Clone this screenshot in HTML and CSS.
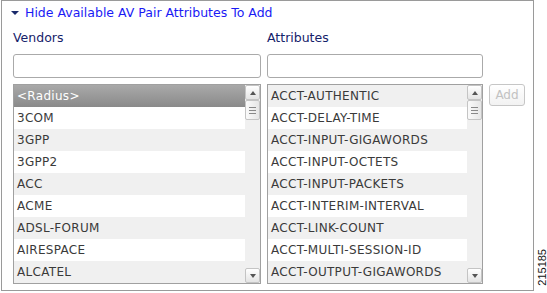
FILE: index.html
```html
<!DOCTYPE html>
<html lang="en">
<head>
  <meta charset="UTF-8" />
  <title>AV Pair Attributes</title>
  <link rel="stylesheet" href="styles.css">
</head>
<body>
  <div class="page">
    <div class="panel">
      <div class="toggle">
        <span class="caret"></span>
        <span class="toggle-text">Hide Available AV Pair Attributes To Add</span>
      </div>

      <div class="columns">
        <!-- Vendors -->
        <div class="column vendors">
          <div class="label">Vendors</div>
          <input type="text" class="filter" />
          <div class="listbox">
            <ul class="items">
              <li class="selected">&lt;Radius&gt;</li>
              <li>3COM</li>
              <li>3GPP</li>
              <li>3GPP2</li>
              <li>ACC</li>
              <li>ACME</li>
              <li>ADSL-FORUM</li>
              <li>AIRESPACE</li>
              <li>ALCATEL</li>
            </ul>
            <div class="scrollbar">
              <div class="sb-btn up"></div>
              <div class="sb-thumb"><span></span><span></span><span></span></div>
              <div class="sb-track"></div>
              <div class="sb-btn down"></div>
            </div>
          </div>
        </div>

        <!-- Attributes -->
        <div class="column attributes">
          <div class="label">Attributes</div>
          <input type="text" class="filter" />
          <div class="listbox">
            <ul class="items">
              <li>ACCT-AUTHENTIC</li>
              <li>ACCT-DELAY-TIME</li>
              <li>ACCT-INPUT-GIGAWORDS</li>
              <li>ACCT-INPUT-OCTETS</li>
              <li>ACCT-INPUT-PACKETS</li>
              <li>ACCT-INTERIM-INTERVAL</li>
              <li>ACCT-LINK-COUNT</li>
              <li>ACCT-MULTI-SESSION-ID</li>
              <li>ACCT-OUTPUT-GIGAWORDS</li>
            </ul>
            <div class="scrollbar">
              <div class="sb-btn up"></div>
              <div class="sb-thumb"><span></span><span></span><span></span></div>
              <div class="sb-track"></div>
              <div class="sb-btn down"></div>
            </div>
          </div>
        </div>

        <div class="actions">
          <button class="add" disabled>Add</button>
        </div>
      </div>
    </div>

    <div class="fig-id">215185</div>
  </div>
</body>
</html>
```

FILE: styles.css
```css
body {
  margin: 0;
  font-family: "DejaVu Sans", Verdana, sans-serif;
  background: #fff;
}

.page {
  display: flex;
  align-items: flex-end;
  height: 293px;
}

.panel {
  width: 520px;
  height: 289px;
  margin-left: 1px;
  margin-bottom: 2px;
  padding: 0 0 0 11px;
  border: 1px solid #9a9a9a;
  box-sizing: content-box;
}

.toggle {
  display: flex;
  align-items: center;
  height: 16px;
  margin-top: 4px;
}

.caret {
  width: 0;
  height: 0;
  margin-left: -2px;
  margin-right: 6px;
  border-left: 4px solid transparent;
  border-right: 4px solid transparent;
  border-top: 4px solid #1a2a6b;
}

.toggle-text {
  font-size: 12.5px;
  color: #1a1af5;
  line-height: 16px;
}

.columns {
  display: flex;
  gap: 6px;
  margin-top: 9px;
}

.column {
  display: flex;
  flex-direction: column;
}

.vendors { width: 248px; }
.attributes { width: 216px; }

.label {
  font-size: 12.5px;
  line-height: 16px;
  color: #15226a;
}

.filter {
  height: 24px;
  margin: 8px 0 0 0;
  padding: 0 4px;
  border: 1px solid #aaa;
  border-radius: 3px;
  box-sizing: border-box;
  width: 100%;
  font: inherit;
}

.listbox {
  display: flex;
  height: 200px;
  margin-top: 6px;
  border: 1px solid #a0a0a0;
  background: #f0f0f0;
  box-sizing: border-box;
  overflow: hidden;
}

.items {
  flex: 1;
  margin: 0;
  padding: 0;
  list-style: none;
}

.items li {
  height: 22px;
  line-height: 23px;
  padding-left: 3px;
  font-size: 12px;
  letter-spacing: 0.3px;
  color: #3a3a3a;
  white-space: nowrap;
  background: #f0f0f0;
}

.items li:nth-child(even) {
  background: #fff;
}

.items li.selected {
  background: linear-gradient(#a9a9a9, #8a8a8a);
  color: #fff;
}

.scrollbar {
  width: 15px;
  display: flex;
  flex-direction: column;
  background: #f0f0f0;
}

.sb-btn {
  height: 15px;
  border: 1px solid #c4c4c4;
  border-radius: 2px;
  background: linear-gradient(#fff, #e4e4e4);
  box-sizing: border-box;
  display: flex;
  align-items: center;
  justify-content: center;
}

.sb-btn::after {
  content: "";
  width: 0;
  height: 0;
  border-left: 3px solid transparent;
  border-right: 3px solid transparent;
}

.sb-btn.up::after { border-bottom: 4px solid #555; }
.sb-btn.down::after { border-top: 4px solid #555; }

.sb-thumb {
  height: 20px;
  border: 1px solid #c4c4c4;
  border-radius: 2px;
  background: linear-gradient(90deg, #fafafa, #e6e6e6);
  box-sizing: border-box;
  display: flex;
  flex-direction: column;
  align-items: center;
  justify-content: center;
  gap: 2px;
}

.sb-thumb span {
  width: 7px;
  height: 1px;
  background: #888;
}

.sb-track { flex: 1; }

.actions {
  padding-top: 54px;
}

.add {
  width: 36px;
  height: 22px;
  padding: 0;
  font: inherit;
  font-size: 12px;
  color: #c2c2c2;
  background: linear-gradient(#fff, #f2f2f2);
  border: 1px solid #c6c6c6;
  border-radius: 3px;
}

.fig-id {
  writing-mode: vertical-rl;
  transform: rotate(180deg);
  font-family: "Liberation Sans", Arial, sans-serif;
  font-size: 11px;
  color: #111;
  margin: 0 0 7px 3px;
  line-height: 10px;
}
```
